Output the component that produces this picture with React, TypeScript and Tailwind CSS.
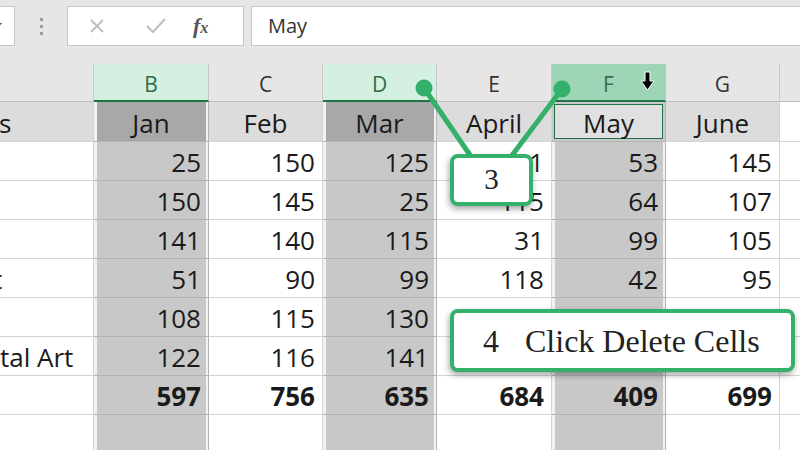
import React from "react";

const cols = ["", "B", "C", "D", "E", "F", "G", ""];
const picked = [false, true, false, true, false, true, false, false];
const months = ["s", "Jan", "Feb", "Mar", "April", "May", "June", ""];

// values under the "4" callout are hidden in the picture, so they stay empty
const rows = [
  ["", "25", "150", "125", "121", "53", "145", ""],
  ["", "150", "145", "25", "115", "64", "107", ""],
  ["", "141", "140", "115", "31", "99", "105", ""],
  ["t", "51", "90", "99", "118", "42", "95", ""],
  ["", "108", "115", "130", "", "", "", ""],
  ["tal Art", "122", "116", "141", "", "", "", ""],
  ["", "597", "756", "635", "684", "409", "699", ""],
  ["", "", "", "", "", "", "", ""],
];

const grid = "grid grid-cols-[94px_115px_114px_114px_115px_114px_114px_1fr]";

function HeaderCell({ label, i }: { label: string; i: number }) {
  if (i === 5) {
    return (
      <div className="relative h-[38px] pt-[5px] bg-[#9fd5b7] border-r border-[#c4c4c4] border-b-2 border-b-[#217346] flex items-center justify-center text-[#3b6d52]">
        {label}
        <svg className="absolute left-[88px] top-[7px]" width="15" height="20" viewBox="0 0 15 20">
          <path d="M5 1 H10 V10 H14 L7.5 19 L1 10 H5 Z" fill="#000" stroke="#fff" strokeWidth="1" />
        </svg>
      </div>
    );
  }
  if (picked[i]) {
    return (
      <div className="h-[38px] pt-[5px] bg-[#d3f0e0] border-r border-[#c4c4c4] border-b-2 border-b-[#217346] flex items-center justify-center text-[#2f6b4b]">
        {label}
      </div>
    );
  }
  return (
    <div className={`h-[38px] pt-[5px] bg-[#e6e6e6] border-b border-[#bdbdbd] flex items-center justify-center text-[#333] ${i === 7 ? "" : "border-r border-r-[#c8c8c8]"}`}>
      {label}
    </div>
  );
}

function MonthCell({ label, i }: { label: string; i: number }) {
  if (i === 5) {
    return (
      <div className="h-[40px] bg-[#c8c8c8] border-r border-b border-[#b5b5b5] p-[2px]">
        <div className="h-full pt-[3px] bg-[#e0e0e0] border border-[#217346] flex items-center justify-center">{label}</div>
      </div>
    );
  }
  if (i === 0) {
    return (
      <div className="h-[40px] pt-[3px] bg-[#dcdcdc] border-r border-b border-[#d4d4d4] flex items-center overflow-hidden">
        <span className="-ml-[1px]">{label}</span>
      </div>
    );
  }
  if (i === 7) {
    return <div className="h-[40px] bg-white border-b border-[#d4d4d4]" />;
  }
  return (
    <div
      className={`h-[40px] pt-[3px] border-r border-b flex items-center justify-center ${
        picked[i]
          ? "bg-[#a8a8a8] border-[#b5b5b5] shadow-[inset_3px_0_0_#f2f2f2,inset_-2px_0_0_#f2f2f2]"
          : "bg-[#dcdcdc] border-[#d4d4d4]"
      }`}
    >
      {label}
    </div>
  );
}

function DataCell({ text, i, bold }: { text: string; i: number; bold: boolean }) {
  if (i === 0) {
    return (
      <div className="h-[39px] pt-[3px] bg-white border-r border-b border-[#d4d4d4] flex items-center overflow-hidden whitespace-nowrap">
        <span className={text === "t" ? "-ml-[7px]" : "ml-0"}>{text}</span>
      </div>
    );
  }
  return (
    <div
      className={`h-[39px] pt-[3px] flex items-center justify-end pr-[7px] ${bold ? "font-bold" : ""} ${
        picked[i]
          ? "bg-[#c8c8c8] border-r border-b border-[#b3b3b3] shadow-[inset_3px_0_0_#f2f2f2,inset_-2px_0_0_#f2f2f2]"
          : i === 7
          ? "bg-white border-b border-[#d4d4d4]"
          : "bg-white border-r border-b border-[#d4d4d4]"
      }`}
    >
      {text}
    </div>
  );
}

export default function App() {
  return (
    <div className="relative w-[800px] h-[450px] overflow-hidden bg-white font-['Open_Sans',sans-serif] text-[26px] text-[#1a1a1a]">
      {/* formula bar */}
      <div className="h-[64px] bg-[#e6e6e6] flex items-start pt-[6px]">
        <div className="-ml-[12px] w-[27px] h-[40px] bg-white border border-[#c6c6c6] flex items-center justify-end pr-[12px]">
          <svg width="8" height="6" viewBox="0 0 8 6">
            <path d="M0 0 L8 0 L4 5 Z" fill="#555" />
          </svg>
        </div>
        <div className="ml-[24px] w-[5px] h-[40px] flex flex-col items-center justify-center gap-[4px]">
          <span className="w-[3px] h-[3px] bg-[#9a9a9a]" />
          <span className="w-[3px] h-[3px] bg-[#9a9a9a]" />
          <span className="w-[3px] h-[3px] bg-[#9a9a9a]" />
        </div>
        <div className="ml-[23px] w-[177px] h-[40px] bg-white border border-[#c6c6c6] flex items-center">
          <svg className="ml-[21px]" width="16" height="16" viewBox="0 0 16 16">
            <path d="M2 2 L14 14 M14 2 L2 14" stroke="#bdbdbd" strokeWidth="1.8" />
          </svg>
          <svg className="ml-[41px]" width="20" height="16" viewBox="0 0 20 16">
            <path d="M1 8 L7 14 L19 1" stroke="#bdbdbd" strokeWidth="2" fill="none" />
          </svg>
          <span className="ml-[27px] font-['Liberation_Serif',serif] italic font-bold text-[22px] text-[#555] leading-none">
            f<span className="text-[16px]">x</span>
          </span>
        </div>
        <div className="ml-[7px] flex-1 h-[40px] bg-white border border-[#c6c6c6] border-r-0 flex items-center pl-[16px] text-[20px] text-[#333]">
          May
        </div>
      </div>

      {/* column letters */}
      <div className={`${grid} text-[21px]`}>
        {cols.map((c, i) => (
          <HeaderCell key={i} label={c} i={i} />
        ))}
      </div>

      {/* month row */}
      <div className={grid}>
        {months.map((m, i) => (
          <MonthCell key={i} label={m} i={i} />
        ))}
      </div>

      {rows.map((r, ri) => (
        <div key={ri} className={grid}>
          {r.map((t, i) => (
            <DataCell key={i} text={t} i={i} bold={ri === 6} />
          ))}
        </div>
      ))}

      {/* callouts */}
      <svg className="absolute left-0 top-0" width="800" height="450" viewBox="0 0 800 450">
        <line x1="424" y1="88" x2="472" y2="158" stroke="#33b06a" strokeWidth="5" strokeLinecap="round" />
        <line x1="562" y1="89" x2="510" y2="158" stroke="#33b06a" strokeWidth="5" strokeLinecap="round" />
        <circle cx="424" cy="88" r="8.5" fill="#33b06a" />
        <circle cx="562" cy="89" r="8.5" fill="#33b06a" />
      </svg>

      <div className="absolute left-[450px] top-[154px] w-[83px] h-[52px] bg-white border-[4px] border-[#33b06a] rounded-[8px] shadow-[-1px_3px_6px_rgba(0,0,0,0.35)] flex items-center justify-center font-['Liberation_Serif',serif] text-[29px] text-[#222]">
        3
      </div>

      <div className="absolute left-[450px] top-[309px] w-[345px] h-[63px] bg-white border-[4px] border-[#33b06a] rounded-[8px] shadow-[-1px_3px_6px_rgba(0,0,0,0.35)] flex items-center font-['Liberation_Serif',serif] text-[32px] text-[#222]">
        <span className="ml-[29px]">4</span>
        <span className="ml-[26px]">Click Delete Cells</span>
      </div>
    </div>
  );
}
